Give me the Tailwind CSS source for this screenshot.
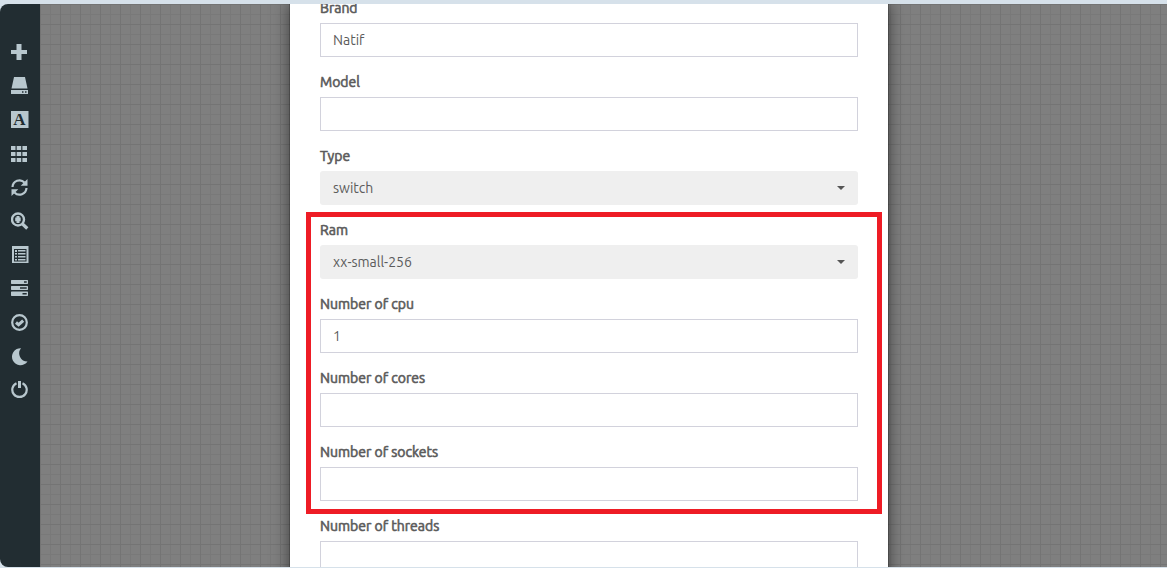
<!DOCTYPE html>
<html lang="en">
<head>
<meta charset="utf-8">
<meta name="viewport" content="width=device-width, initial-scale=1">
<title>Node settings</title>
<script src="https://cdn.jsdelivr.net/npm/@tailwindcss/browser@4"></script>
</head>
<body class="flex h-screen flex-col overflow-hidden bg-[#d6e1ea] pt-1 pb-px font-['Ubuntu','Noto_Sans',sans-serif] text-sm leading-5 text-[#5b5b5b]">
<div class="flex min-h-0 flex-1 overflow-hidden rounded-l-lg">
  <nav aria-label="Tools" class="w-10 shrink-0 bg-[#222d32] pt-8 text-[#b8c7ce]">
    <ul class="flex h-[371px] flex-col justify-between">
      <li><button type="button" aria-label="Add" class="flex h-[33px] w-full items-center justify-center"><svg class="size-[18px]" viewBox="0 0 18 18" fill="currentColor"><path d="M5.500 0h5v6H16v4h-5.500v6h-5v-6H0V6h5.500z"/></svg></button></li>
      <li><button type="button" aria-label="Nodes" class="flex h-[33px] w-full items-center justify-center"><svg class="size-[18px]" viewBox="0 0 18 18" fill="currentColor"><path d="M3 0h11l2.500 11.500h-16z"/><path fill-rule="evenodd" d="M0 13h17v4H0zM11 14.300v1.400h1.500v-1.400zM14 14.300v1.400h1.500v-1.400z"/></svg></button></li>
      <li><button type="button" aria-label="Text" class="flex h-[33px] w-full items-center justify-center"><svg class="size-[18px]" viewBox="0 0 18 18"><path fill="currentColor" d="M0 0h17.500v17H0z"/><text x="8.500" y="14" text-anchor="middle" font-family="Liberation Serif, serif" font-weight="bold" font-size="17" fill="#222d32">A</text></svg></button></li>
      <li><button type="button" aria-label="Grid" class="flex h-[33px] w-full items-center justify-center"><svg class="size-[18px]" viewBox="0 0 18 18" fill="currentColor"><path d="M0 1h4.500v4H0zm5.700 0h4.500v4H5.700zm5.700 0h4.600v4h-4.600zM0 7h4.500v4H0zm5.700 0h4.500v4H5.700zm5.700 0h4.600v4h-4.600zM0 13h4.500v4H0zm5.700 0h4.500v4H5.700zm5.700 0h4.600v4h-4.600z"/></svg></button></li>
      <li><button type="button" aria-label="Refresh" class="flex h-[33px] w-full items-center justify-center"><svg class="size-[18px]" viewBox="0 0 18 18" fill="none" stroke="currentColor" stroke-width="2.200"><path d="M1.500 8A7 7 0 0 1 13.500 3.500M15.500 9A7 7 0 0 1 3.500 13.500"/><path fill="currentColor" stroke="none" d="M16.500 0v6.800H9.700zM.5 17v-6.800h6.800z"/></svg></button></li>
      <li><button type="button" aria-label="Find" class="flex h-[33px] w-full items-center justify-center"><svg class="size-[18px]" viewBox="0 0 18 18" fill="none" stroke="currentColor"><circle cx="7" cy="7.500" r="6" stroke-width="2.400"/><path stroke-width="3.200" d="m11 11.500 5.300 5"/><path fill="currentColor" stroke="none" d="M5.500 4h3v1.500h1.200v3.800H8.500V11h-3V9.300H4.200V5.500h1.300z"/></svg></button></li>
      <li><button type="button" aria-label="List" class="flex h-[33px] w-full items-center justify-center"><svg class="size-[18px]" viewBox="0 0 18 18" fill="currentColor"><path fill-rule="evenodd" d="M1 0h16.500v17H1zM3 3v12.500h12.500V3z"/><path d="M4 4h2v2H4zm3 0h7.500v1.600H7zM4 7h2v1.600H4zm3 0h7.500v1.600H7zm-3 3h2v1.600H4zm3 0h7.500v1.600H7zm-3 3h2v1.600H4zm3 0h7.500v1.600H7z"/></svg></button></li>
      <li><button type="button" aria-label="Status" class="flex h-[33px] w-full items-center justify-center"><svg class="size-[18px]" viewBox="0 0 18 18" fill="currentColor" fill-rule="evenodd"><path d="M.5 0h16l.5.500v3l-.5.500H.5L0 3.500v-3zM13 1.200v1.600h2.700V1.200zM.5 6h16l.5.500v3l-.5.500H.5L0 9.500v-3zM9 7.200v1.600h6.700V7.200zM.5 11.500h16l.5.500v3.500l-.5.500H.5l-.5-.5V12zM11.500 13v1.600h4.200V13z"/></svg></button></li>
      <li><button type="button" aria-label="Check" class="flex h-[33px] w-full items-center justify-center"><svg class="size-[18px]" viewBox="0 0 18 18" fill="none" stroke="currentColor"><circle cx="8.500" cy="8.500" r="7.300" stroke-width="2.200"/><path stroke-width="3" d="m5 8.500 2.600 2.200 4.600-4.100"/></svg></button></li>
      <li><button type="button" aria-label="Dark mode" class="flex h-[33px] w-full items-center justify-center"><svg class="size-[18px]" viewBox="0 0 18 18" fill="currentColor"><path d="M10 .2A8.500 8.500 0 1 0 16.500 13.500 8.200 8.200 0 0 1 10 .2z"/></svg></button></li>
      <li><button type="button" aria-label="Log out" class="flex h-[33px] w-full items-center justify-center"><svg class="size-[18px]" viewBox="0 0 18 18" fill="none" stroke="currentColor" stroke-width="2.200"><path d="M5.500 2.200a7.200 7.200 0 1 0 6 0"/><path stroke-width="3" d="M8.500 0v7"/></svg></button></li>
    </ul>
  </nav>
  <main class="flex min-w-0 flex-1 items-start justify-center overflow-hidden bg-[#7f7f7f] bg-[linear-gradient(#747474_1px,transparent_1px),linear-gradient(90deg,#747474_1px,transparent_1px),linear-gradient(#797979_1px,transparent_1px),linear-gradient(90deg,#797979_1px,transparent_1px)] bg-[size:20px_20px,20px_20px,10px_10px,10px_10px] pr-[29px]">
    <form class="-mt-1.5 flex w-full max-w-[600px] flex-col gap-[15px] border-x border-black/20 bg-white bg-clip-padding px-[30px] pb-8 shadow-[0_5px_15px_rgba(0,0,0,0.5)]">
      <div class="flex flex-col gap-[5px]">
        <label for="brand" class="[-webkit-text-stroke:0.6px]">Brand</label>
        <input id="brand" value="Natif" class="h-[34px] w-full border border-[#d2d2dc] bg-white px-3">
      </div>
      <div class="flex flex-col gap-[5px]">
        <label for="model" class="[-webkit-text-stroke:0.6px]">Model</label>
        <input id="model" class="h-[34px] w-full border border-[#d2d2dc] bg-white px-3">
      </div>
      <div class="flex flex-col gap-[5px]">
        <label for="type" class="[-webkit-text-stroke:0.6px]">Type</label>
        <div class="relative">
          <select id="type" class="block h-[34px] w-full appearance-none rounded-[3px] bg-[#efefef] px-[13px]"><option>switch</option></select>
          <svg class="pointer-events-none absolute top-[15px] right-[13px] h-1 w-2" viewBox="0 0 8 4" fill="#555"><path d="M0 0h8L4 4z"/></svg>
        </div>
      </div>
      <div class="relative flex flex-col gap-[15px]">
        <div class="pointer-events-none absolute -top-2 -right-6 -bottom-[13px] -left-3.5 border-5 border-[#ee1c25]"></div>
        <div class="flex flex-col gap-[5px]">
          <label for="ram" class="[-webkit-text-stroke:0.6px]">Ram</label>
          <div class="relative">
            <select id="ram" class="block h-[34px] w-full appearance-none rounded-[3px] bg-[#efefef] px-[13px]"><option>xx-small-256</option></select>
            <svg class="pointer-events-none absolute top-[15px] right-[13px] h-1 w-2" viewBox="0 0 8 4" fill="#555"><path d="M0 0h8L4 4z"/></svg>
          </div>
        </div>
        <div class="flex flex-col gap-[5px]">
          <label for="cpu" class="[-webkit-text-stroke:0.6px]">Number of cpu</label>
          <input id="cpu" value="1" class="h-[34px] w-full border border-[#d2d2dc] bg-white px-3">
        </div>
        <div class="flex flex-col gap-[5px]">
          <label for="cores" class="[-webkit-text-stroke:0.6px]">Number of cores</label>
          <input id="cores" class="h-[34px] w-full border border-[#d2d2dc] bg-white px-3">
        </div>
        <div class="flex flex-col gap-[5px]">
          <label for="sockets" class="[-webkit-text-stroke:0.6px]">Number of sockets</label>
          <input id="sockets" class="h-[34px] w-full border border-[#d2d2dc] bg-white px-3">
        </div>
      </div>
      <div class="flex flex-col gap-[5px]">
        <label for="threads" class="[-webkit-text-stroke:0.6px]">Number of threads</label>
        <input id="threads" class="h-[34px] w-full border border-[#d2d2dc] bg-white px-3">
      </div>
    </form>
  </main>
</div>
</body>
</html>
